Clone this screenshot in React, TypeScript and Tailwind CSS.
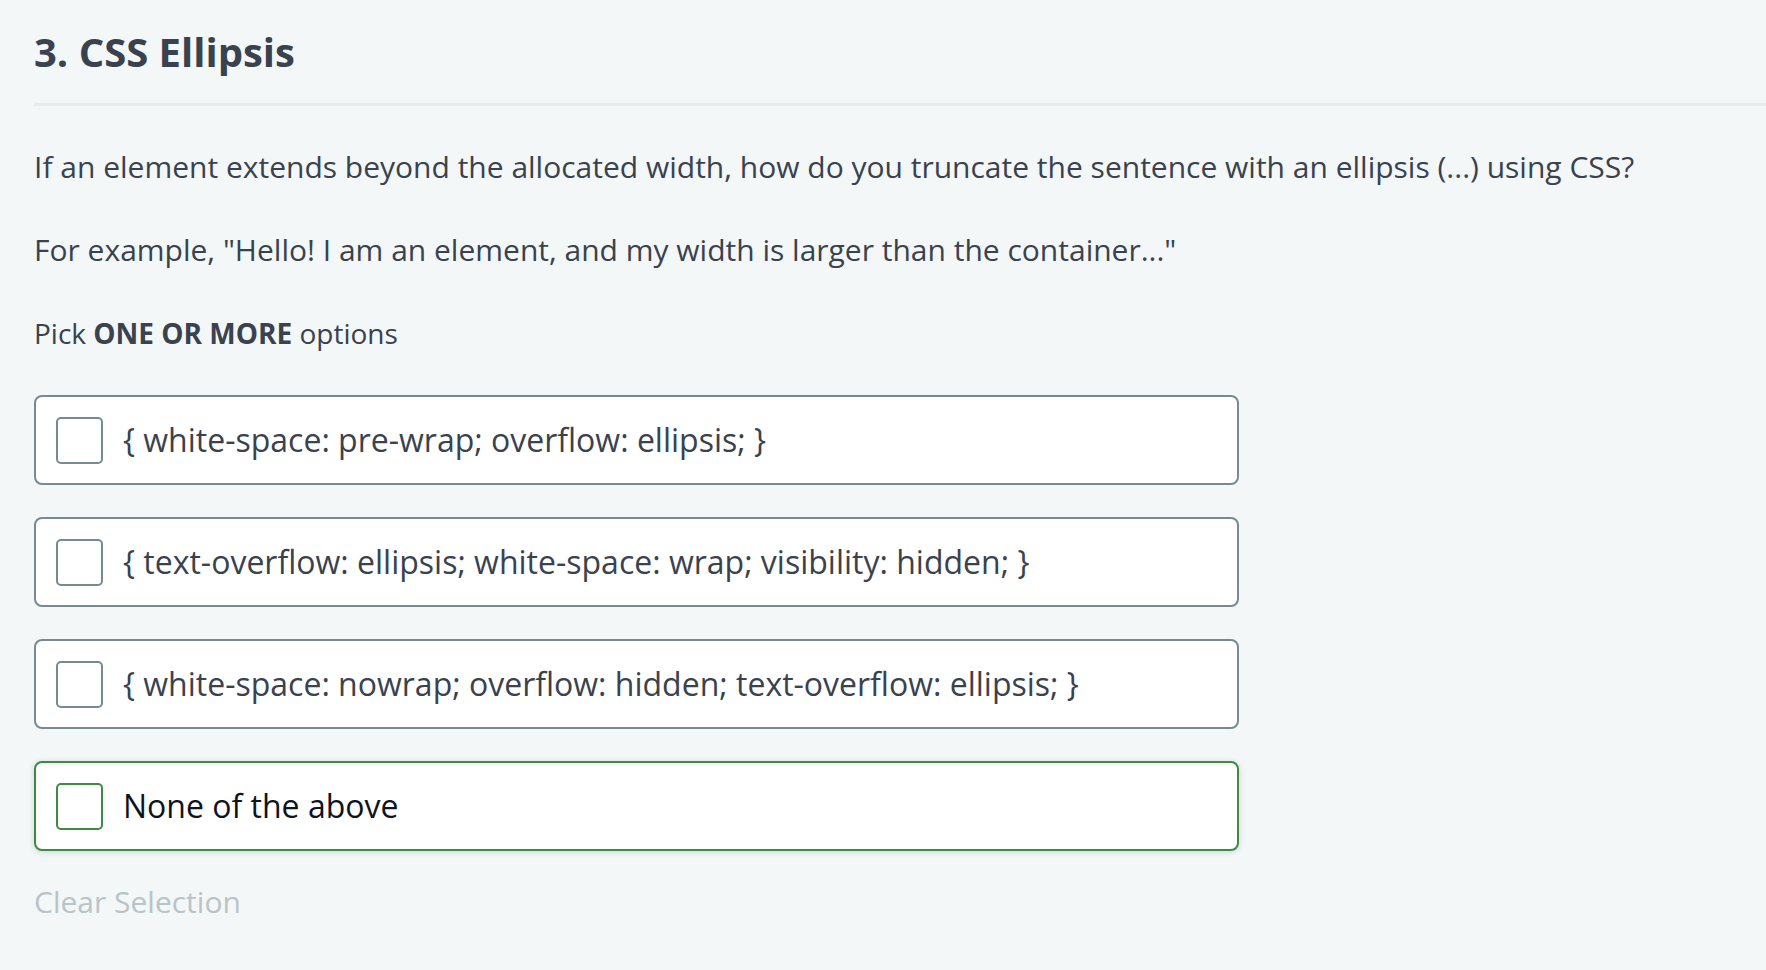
import React from "react";

const options = [
  { id: 1, text: "{ white-space: pre-wrap; overflow: ellipsis; }", active: false },
  { id: 2, text: "{ text-overflow: ellipsis; white-space: wrap; visibility: hidden; }", active: false },
  { id: 3, text: "{ white-space: nowrap; overflow: hidden; text-overflow: ellipsis; }", active: false },
  { id: 4, text: "None of the above", active: true },
];

export default function App() {
  return (
    <div className="min-h-screen w-full bg-[#f3f7f7] font-['Open_Sans',sans-serif] text-[#39424e]">
      <div className="pl-[34px] pt-[24px]">
        {/* Header */}
        <h1 className="text-[40px] leading-[56px] font-bold">3. CSS Ellipsis</h1>
        <div className="mt-[23px] h-[3px] bg-[#e5ebee]" />

        {/* Question */}
        <p className="mt-[40px] text-[30px] leading-[42px]">
          If an element extends beyond the allocated width, how do you truncate the sentence with an ellipsis (...) using CSS?
        </p>
        <p className="mt-[41px] text-[30px] leading-[42px]">
          For example, "Hello! I am an element, and my width is larger than the container..."
        </p>
        <p className="mt-[42px] text-[28px] leading-[40px]">
          Pick <span className="font-bold">ONE OR MORE</span> options
        </p>

        {/* Options */}
        <div className="mt-[42px] flex w-[1205px] flex-col gap-[32px]">
          {options.map((opt) => (
            <div
              key={opt.id}
              className={`flex h-[90px] items-center gap-[20px] rounded-[8px] border-2 bg-white px-[20px] ${
                opt.active
                  ? "border-[#3d8b40] text-[#0e141e] shadow-[0_1px_6px_rgba(0,0,0,0.15)]"
                  : "border-[#768b91] text-[#39424e]"
              }`}
            >
              <div
                className={`h-[47px] w-[47px] shrink-0 rounded-[5px] border-2 bg-white ${
                  opt.active ? "border-[#3d8b40]" : "border-[#768b91]"
                }`}
              />
              <span className="text-[32px] leading-[44px]">{opt.text}</span>
            </div>
          ))}
        </div>

        <div className="mt-[30px] text-[30px] leading-[42px] text-[#b8c4c7]">Clear Selection</div>
      </div>
    </div>
  );
}
